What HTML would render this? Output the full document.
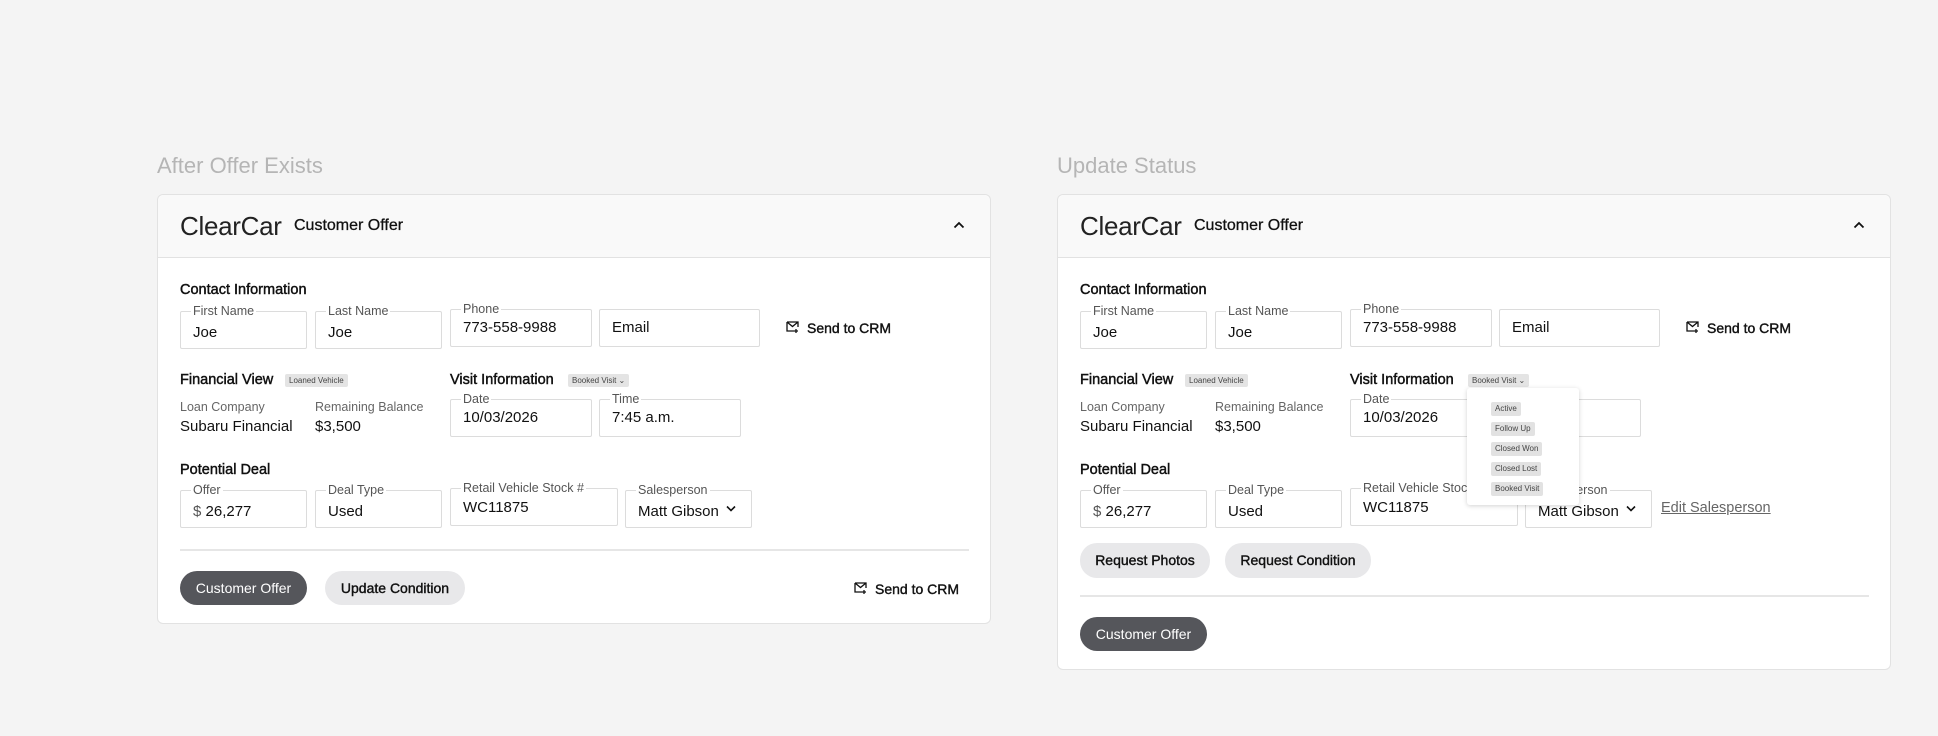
<!DOCTYPE html>
<html><head><meta charset="utf-8"><style>
*{box-sizing:border-box;margin:0;padding:0}
body{width:1938px;height:736px;background:#f4f4f4;font-family:"Liberation Sans",Arial,sans-serif;color:#111;position:relative;overflow:hidden}
.t{position:absolute;font-size:22px;color:#b5b5b5;top:153px}
.card{position:absolute;top:194px;width:834px;background:#fff;border:1px solid #e2e2e2;border-radius:6px;overflow:visible}
.hd{position:absolute;left:0;top:0;right:0;height:63px;background:#f9f9f9;border-bottom:1px solid #e2e2e2;border-radius:6px 6px 0 0}
.logo{position:absolute;left:22px;top:16px;font-size:26px;letter-spacing:-0.3px;font-weight:normal;color:#222}
.hdt{position:absolute;left:136px;top:22px;font-size:16px;-webkit-text-stroke:0.3px #111}
.chev{position:absolute;left:795px;top:26px}
.a{position:absolute}
.h{position:absolute;font-size:14.5px;color:#111;line-height:18px;-webkit-text-stroke:0.45px #111}
.f{position:absolute;border:1px solid #dcdcdc;height:38px;border-radius:2px}
.f .l{position:absolute;left:10px;top:-8px;background:#fff;padding:0 2px;font-size:12.5px;color:#555;line-height:14px}
.f .v{position:absolute;left:12px;top:12px;font-size:15px;color:#111;line-height:18px}
.chip{position:absolute;background:#e4e4e4;font-size:8px;color:#444;padding:2px 4px;border-radius:2px;line-height:9px}
.sm{position:absolute;font-size:12.5px;color:#666}
.val{position:absolute;font-size:15px;color:#111}
.btn{position:absolute;height:34px;border-radius:17px;background:#e8e8ea;font-size:14px;color:#111;text-align:center;line-height:34px;-webkit-text-stroke:0.4px #111}
.dark{background:#55565b;color:#fff;-webkit-text-stroke:0}
.div{position:absolute;height:2px;background:#e6e6e6}
.crm{position:absolute;font-size:14px;color:#111;-webkit-text-stroke:0.4px #111}
.dd{position:absolute;background:#fff;border-radius:3px;box-shadow:0 1px 5px rgba(0,0,0,.18)}
.it{position:absolute;left:24px;background:#e2e2e2;font-size:8px;color:#444;padding:2px 4px;border-radius:2px;line-height:10px}
.link{position:absolute;font-size:14.5px;color:#666;text-decoration:underline}
</style></head><body>

<div class="t" style="left:157px">After Offer Exists</div>
<div class="t" style="left:1057px">Update Status</div>

<!-- CARD 1 -->
<div class="card" style="left:157px;height:430px">
 <div class="hd"><div class="logo">ClearCar</div><div class="hdt">Customer Offer</div>
 <svg class="chev" width="12" height="8" viewBox="0 0 12 8"><path d="M1.5 6.5L6 2l4.5 4.5" fill="none" stroke="#111" stroke-width="1.8"/></svg></div>
 <div class="h" style="left:22px;top:86px">Contact Information</div>
 <div class="f" style="left:22px;top:116px;width:127px"><span class="l">First Name</span><span class="v">Joe</span></div>
 <div class="f" style="left:157px;top:116px;width:127px"><span class="l">Last Name</span><span class="v">Joe</span></div>
 <div class="f" style="left:292px;top:114px;width:142px"><span class="l">Phone</span><span class="v" style="top:9px">773-558-9988</span></div>
 <div class="f" style="left:441px;top:114px;width:161px"><span class="v" style="top:9px">Email</span></div>
 <svg class="a" style="left:628px;top:126px" width="13" height="12" viewBox="0 0 13 12"><path d="M1 1h11v5M1 1v9h7M1 1l5.5 4.5L12 1M10 8v4M8 10h4" fill="none" stroke="#111" stroke-width="1.3"/></svg>
 <div class="crm" style="left:649px;top:125px">Send to CRM</div>

 <div class="h" style="left:22px;top:176px">Financial View</div>
 <div class="chip" style="left:127px;top:179px">Loaned Vehicle</div>
 <div class="h" style="left:292px;top:176px">Visit Information</div>
 <div class="chip" style="left:410px;top:179px">Booked Visit ⌄</div>
 <div class="sm" style="left:22px;top:205px">Loan Company</div>
 <div class="val" style="left:22px;top:223px">Subaru Financial</div>
 <div class="sm" style="left:157px;top:205px">Remaining Balance</div>
 <div class="val" style="left:157px;top:223px">$3,500</div>
 <div class="f" style="left:292px;top:204px;width:142px"><span class="l">Date</span><span class="v" style="top:9px">10/03/2026</span></div>
 <div class="f" style="left:441px;top:204px;width:142px"><span class="l">Time</span><span class="v" style="top:9px">7:45 a.m.</span></div>

 <div class="h" style="left:22px;top:266px">Potential Deal</div>
 <div class="f" style="left:22px;top:295px;width:127px"><span class="l">Offer</span><span class="v"><span style="color:#555">$</span> 26,277</span></div>
 <div class="f" style="left:157px;top:295px;width:127px"><span class="l">Deal Type</span><span class="v">Used</span></div>
 <div class="f" style="left:292px;top:293px;width:168px"><span class="l">Retail Vehicle Stock #</span><span class="v" style="top:10px">WC11875</span></div>
 <div class="f" style="left:467px;top:295px;width:127px"><span class="l">Salesperson</span><span class="v">Matt Gibson</span>
  <svg class="a" style="left:100px;top:14px" width="10" height="7" viewBox="0 0 10 7"><path d="M1 1.5l4 4 4-4" fill="none" stroke="#111" stroke-width="1.6"/></svg></div>
 <div class="div" style="left:22px;top:354px;width:789px"></div>
 <div class="btn dark" style="left:22px;top:376px;width:127px">Customer Offer</div>
 <div class="btn" style="left:167px;top:376px;width:140px">Update Condition</div>
 <svg class="a" style="left:696px;top:387px" width="13" height="12" viewBox="0 0 13 12"><path d="M1 1h11v5M1 1v9h7M1 1l5.5 4.5L12 1M10 8v4M8 10h4" fill="none" stroke="#111" stroke-width="1.3"/></svg>
 <div class="crm" style="left:717px;top:386px">Send to CRM</div>
</div>

<!-- CARD 2 -->
<div class="card" style="left:1057px;height:476px">
 <div class="hd"><div class="logo">ClearCar</div><div class="hdt">Customer Offer</div>
 <svg class="chev" width="12" height="8" viewBox="0 0 12 8"><path d="M1.5 6.5L6 2l4.5 4.5" fill="none" stroke="#111" stroke-width="1.8"/></svg></div>
 <div class="h" style="left:22px;top:86px">Contact Information</div>
 <div class="f" style="left:22px;top:116px;width:127px"><span class="l">First Name</span><span class="v">Joe</span></div>
 <div class="f" style="left:157px;top:116px;width:127px"><span class="l">Last Name</span><span class="v">Joe</span></div>
 <div class="f" style="left:292px;top:114px;width:142px"><span class="l">Phone</span><span class="v" style="top:9px">773-558-9988</span></div>
 <div class="f" style="left:441px;top:114px;width:161px"><span class="v" style="top:9px">Email</span></div>
 <svg class="a" style="left:628px;top:126px" width="13" height="12" viewBox="0 0 13 12"><path d="M1 1h11v5M1 1v9h7M1 1l5.5 4.5L12 1M10 8v4M8 10h4" fill="none" stroke="#111" stroke-width="1.3"/></svg>
 <div class="crm" style="left:649px;top:125px">Send to CRM</div>

 <div class="h" style="left:22px;top:176px">Financial View</div>
 <div class="chip" style="left:127px;top:179px">Loaned Vehicle</div>
 <div class="h" style="left:292px;top:176px">Visit Information</div>
 <div class="chip" style="left:410px;top:179px">Booked Visit ⌄</div>
 <div class="sm" style="left:22px;top:205px">Loan Company</div>
 <div class="val" style="left:22px;top:223px">Subaru Financial</div>
 <div class="sm" style="left:157px;top:205px">Remaining Balance</div>
 <div class="val" style="left:157px;top:223px">$3,500</div>
 <div class="f" style="left:292px;top:204px;width:142px"><span class="l">Date</span><span class="v" style="top:9px">10/03/2026</span></div>
 <div class="f" style="left:441px;top:204px;width:142px"></div>

 <div class="h" style="left:22px;top:266px">Potential Deal</div>
 <div class="f" style="left:22px;top:295px;width:127px"><span class="l">Offer</span><span class="v"><span style="color:#555">$</span> 26,277</span></div>
 <div class="f" style="left:157px;top:295px;width:127px"><span class="l">Deal Type</span><span class="v">Used</span></div>
 <div class="f" style="left:292px;top:293px;width:168px"><span class="l">Retail Vehicle Stock #</span><span class="v" style="top:10px">WC11875</span></div>
 <div class="f" style="left:467px;top:295px;width:127px"><span class="l">Salesperson</span><span class="v">Matt Gibson</span>
  <svg class="a" style="left:100px;top:14px" width="10" height="7" viewBox="0 0 10 7"><path d="M1 1.5l4 4 4-4" fill="none" stroke="#111" stroke-width="1.6"/></svg></div>
 <div class="link" style="left:603px;top:305px">Edit Salesperson</div>
 <div class="btn" style="left:22px;top:348px;width:130px;height:35px;line-height:35px">Request Photos</div>
 <div class="btn" style="left:167px;top:348px;width:146px;height:35px;line-height:35px">Request Condition</div>
 <div class="div" style="left:22px;top:400px;width:789px"></div>
 <div class="btn dark" style="left:22px;top:422px;width:127px">Customer Offer</div>

 <div class="dd" style="left:409px;top:193px;width:112px;height:117px">
  <div class="it" style="top:14px">Active</div>
  <div class="it" style="top:34px">Follow Up</div>
  <div class="it" style="top:54px">Closed Won</div>
  <div class="it" style="top:74px">Closed Lost</div>
  <div class="it" style="top:94px">Booked Visit</div>
 </div>
</div>
</body></html>
